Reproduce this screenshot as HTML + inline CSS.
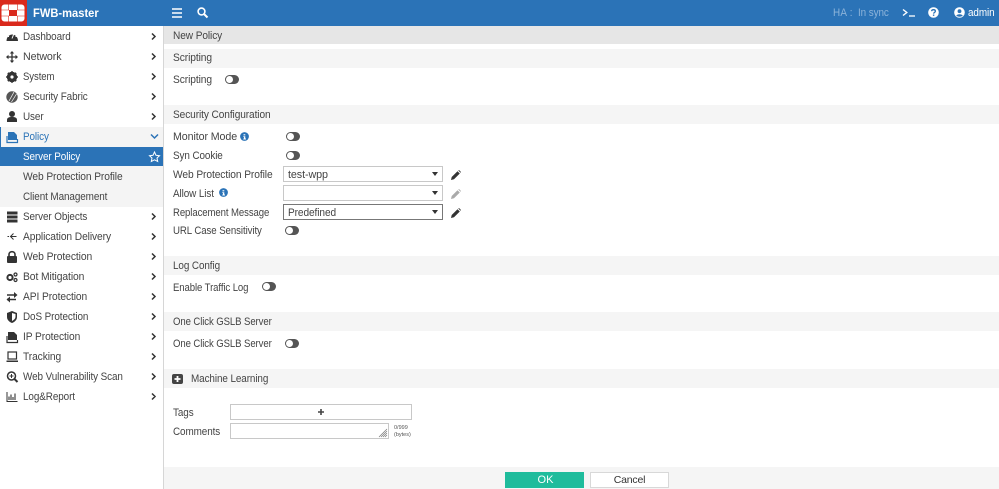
<!DOCTYPE html>
<html><head><meta charset="utf-8"><title>FWB-master</title>
<style>
*{box-sizing:border-box}
html,body{margin:0;padding:0;width:999px;height:489px;overflow:hidden;background:#fff}
body{font-family:"Liberation Sans",sans-serif;font-size:11px;color:#444;position:relative}
.a{position:absolute}
.t{position:absolute;white-space:nowrap;line-height:14px;height:14px;letter-spacing:-.1px;transform:scaleX(.9);transform-origin:0 0;margin-top:1px}
.bar{position:absolute;left:164px;width:835px;height:19px;background:#f5f5f5}
svg{position:absolute;overflow:visible}
.sw{position:absolute;width:14px;height:9px;border-radius:4.5px;background:#555;margin-top:-1px}
.sw:after{content:"";position:absolute;left:1px;top:1px;width:7px;height:7px;border-radius:3.5px;background:#fff}
.sel{position:absolute;left:283px;width:160px;height:16px;background:#fff;border:1px solid #c8c8c8}
.sel:after{content:"";position:absolute;right:4px;top:5px;border:3.5px solid transparent;border-top:4px solid #333;border-bottom:0}
</style></head><body>

<div class="a" style="left:0;top:0;width:999px;height:26px;background:#2b73b7"></div>
<div class="a" style="left:0;top:0;width:27px;height:26px;background:#da291c"></div>
<svg style="left:0;top:0" width="27" height="26" viewBox="0 0 27 26"><path fill="#fff" fill-rule="evenodd" d="M4.500 4.500H21.500A3 3 0 0 1 24.500 7.500V18.500A3 3 0 0 1 21.500 21.500H4.500A3 3 0 0 1 1.500 18.500V7.500A3 3 0 0 1 4.500 4.500ZM9 10V16H17V10Z"/><path d="M8.500 4.500V10M17.500 4.500V10M8.500 16V21.500M17.500 16V21.500M1.500 10H9M17 10H24.500M1.500 16H9M17 16H24.500" stroke="#da291c" stroke-width=".6"/></svg>
<div class="t" style="left:33px;top:5px;color:#fff;font-size:12px;font-weight:bold;letter-spacing:0;transform:scaleX(.93)">FWB-master</div>
<svg style="left:172px;top:8px" width="10" height="10"><path d="M0 1H10M0 5H10M0 9H10" stroke="#fff" stroke-width="1.600"/></svg>
<svg style="left:197px;top:7px" width="11" height="11"><circle cx="4.500" cy="4.500" r="3.400" fill="none" stroke="#fff" stroke-width="1.600"/><path d="M7 7L10.500 10.500" stroke="#fff" stroke-width="2"/></svg>
<div class="t" style="left:833px;top:5px;color:#8db4da;letter-spacing:.3px">HA :</div>
<div class="t" style="left:858px;top:5px;color:#8db4da">In sync</div>
<svg style="left:903px;top:9px" width="12" height="9"><path d="M0 .5L3.800 3.500L0 6.500" fill="none" stroke="#fff" stroke-width="1.400"/><path d="M6 7H12" stroke="#fff" stroke-width="1.300"/></svg>
<svg style="left:928px;top:7px" width="11" height="11"><circle cx="5.500" cy="5.500" r="5.300" fill="#fff"/><path d="M3.600 4.200C3.700 2.200 7.400 2.200 7.400 4.200C7.400 5.400 5.600 5.400 5.600 6.600" fill="none" stroke="#2b73b7" stroke-width="1.300"/><rect x="4.900" y="7.500" width="1.400" height="1.400" fill="#2b73b7"/></svg>
<svg style="left:954px;top:7px" width="11" height="11"><circle cx="5.500" cy="5.500" r="5.300" fill="#fff"/><circle cx="5.500" cy="4.200" r="1.900" fill="#2b73b7"/><path d="M2.300 8.800C3 6.800 8 6.800 8.700 8.800C7.500 10 3.500 10 2.300 8.800Z" fill="#2b73b7"/></svg>
<div class="t" style="left:968px;top:5px;color:#fff;font-size:11px">admin</div>

<!-- sidebar -->
<div class="a" style="left:0;top:26px;width:164px;height:463px;background:#fff;border-right:1px solid #d6d6d6"></div>
<div class="a" style="left:0;top:127px;width:163px;height:20px;background:#f4f4f4;border-left:1px solid #2b73b7"></div>
<div class="a" style="left:0;top:147px;width:163px;height:19px;background:#2b73b7"></div>
<div class="a" style="left:0;top:166px;width:163px;height:41px;background:#f4f4f4"></div>

<div class="t" style="left:23px;top:29px">Dashboard</div>
<div class="t" style="left:23px;top:49px;transform:scaleX(.97)">Network</div>
<div class="t" style="left:23px;top:69px;transform:scaleX(.87)">System</div>
<div class="t" style="left:23px;top:89px">Security Fabric</div>
<div class="t" style="left:23px;top:109px">User</div>
<div class="t" style="left:23px;top:129px;color:#2b73b7">Policy</div>
<div class="t" style="left:23px;top:149px;color:#fff">Server Policy</div>
<div class="t" style="left:23px;top:169px;transform:scaleX(.93)">Web Protection Profile</div>
<div class="t" style="left:23px;top:189px">Client Management</div>
<div class="t" style="left:23px;top:209px">Server Objects</div>
<div class="t" style="left:23px;top:229px;transform:scaleX(.93)">Application Delivery</div>
<div class="t" style="left:23px;top:249px;transform:scaleX(.94)">Web Protection</div>
<div class="t" style="left:23px;top:269px;transform:scaleX(.94)">Bot Mitigation</div>
<div class="t" style="left:23px;top:289px;transform:scaleX(.93)">API Protection</div>
<div class="t" style="left:23px;top:309px">DoS Protection</div>
<div class="t" style="left:23px;top:329px;transform:scaleX(.93)">IP Protection</div>
<div class="t" style="left:23px;top:349px;transform:scaleX(.93)">Tracking</div>
<div class="t" style="left:23px;top:369px">Web Vulnerability Scan</div>
<div class="t" style="left:23px;top:389px">Log&amp;Report</div>

<svg style="left:0;top:0" width="164" height="489" fill="#333">
<g fill="none" stroke="#333" stroke-width="1.500">
<path d="M152 33.500L155 36.500L152 39.500M152 53.500L155 56.500L152 59.500M152 73.500L155 76.500L152 79.500M152 93.500L155 96.500L152 99.500M152 113.500L155 116.500L152 119.500M152 213.500L155 216.500L152 219.500M152 233.500L155 236.500L152 239.500M152 253.500L155 256.500L152 259.500M152 273.500L155 276.500L152 279.500M152 293.500L155 296.500L152 299.500M152 313.500L155 316.500L152 319.500M152 333.500L155 336.500L152 339.500M152 353.500L155 356.500L152 359.500M152 373.500L155 376.500L152 379.500M152 393.500L155 396.500L152 399.500"/>
<path d="M151 134.500L154.500 138L158 134.500" stroke="#2b73b7"/>
</g>
<path d="M154.500 152L156 155.300L159.500 155.700L157 158L157.700 161.500L154.500 159.800L151.300 161.500L152 158L149.500 155.700L153 155.300Z" fill="none" stroke="#fff" stroke-width="1"/>
<!-- dashboard -->
<path d="M6.500 41A5.700 6.500 0 1 1 18 41Z"/><path d="M12 38.500L14 33.500M8 36.500H9M15.500 36.500H16.500M9.500 33.800L10 34.500" stroke="#fff" stroke-width="1"/>
<!-- network -->
<path d="M12 52V62M7 57H17" stroke="#333" stroke-width="1.300"/><path d="M12 51L14.200 53.500H9.800ZM12 63L14.200 60.500H9.800ZM6 57L8.500 54.800V59.200ZM18 57L15.500 54.800V59.200Z"/>
<!-- system -->
<circle cx="12" cy="77" r="3.800" fill="none" stroke="#333" stroke-width="2.800"/><path d="M12 71.200V82.800M6.200 77H17.800M7.900 72.900L16.100 81.100M16.100 72.900L7.900 81.100" stroke="#333" stroke-width="1.800"/><circle cx="12" cy="77" r="1.600" fill="#fff"/>
<!-- fabric -->
<circle cx="12" cy="97" r="5.700" fill="#555"/><path d="M9 101L14 92M11.500 102L16.500 94" stroke="#fff" stroke-width=".7"/>
<!-- user -->
<circle cx="12" cy="114" r="3"/><path d="M7 122V120C7 117.500 9 117 12 117C15 117 17 117.500 17 120V122Z"/>
<!-- policy -->
<path d="M8 132H14L17 135V140H8Z" fill="#2b73b7"/><path d="M7 136V142.500H17.500V139" fill="none" stroke="#2b73b7" stroke-width="1.200"/>
<!-- server objects -->
<path d="M7 212.500H17.500V215.500H7ZM7 216.500H17.500V219.500H7ZM7 220.500H17.500V223.500H7Z" transform="translate(0,-1)"/>
<!-- delivery -->
<path d="M16.500 236.500H11M13.500 233.500L10.500 236.500L13.500 239.500M7.500 236.500H9" fill="none" stroke="#333" stroke-width="1"/>
<!-- lock -->
<rect x="7" y="256" width="10" height="7" rx="1"/><path d="M9 256.500V254.500C9 250.800 15 250.800 15 254.500V256.500" fill="none" stroke="#333" stroke-width="1.600"/>
<!-- bot -->
<circle cx="10" cy="277.500" r="2.600" fill="none" stroke="#333" stroke-width="2"/><circle cx="15.500" cy="274.500" r="1.500" fill="none" stroke="#333" stroke-width="1.200"/><circle cx="15.500" cy="280" r="1.500" fill="none" stroke="#333" stroke-width="1.200"/>
<!-- api -->
<path d="M7 295H16M7 299.500H16" stroke="#333" stroke-width="1.500"/><path d="M14 292L17.500 295L14 298ZM10 296.500L6.500 299.500L10 302.500Z"/>
<!-- dos -->
<path d="M12 311L17 313V317C17 320 14.500 322 12 323C9.500 322 7 320 7 317V313Z"/><path d="M12 313V321C13.500 320 15.500 319 15.500 316.500V314Z" fill="#fff"/>
<!-- ip -->
<path d="M8 332H14L17 335V340H8Z"/><path d="M7 336V342.500H17.500V340" fill="none" stroke="#333" stroke-width="1.200"/>
<!-- tracking -->
<rect x="8" y="352" width="8.500" height="7" fill="none" stroke="#333" stroke-width="1.200"/><path d="M6.500 360.500H18V362H6.500Z"/>
<!-- vuln -->
<circle cx="11.500" cy="376" r="4" fill="none" stroke="#333" stroke-width="1.500"/><path d="M14.500 379L17.500 382" stroke="#333" stroke-width="2"/><path d="M9.500 376H13.500M11.500 374V378" stroke="#333"/>
<!-- log -->
<path d="M7 392V401.500H17.500" fill="none" stroke="#333" stroke-width="1"/><path d="M9 396.500V400M11 394.500V400M13 397V400M15 393.500V400" stroke="#333" stroke-width="1.100"/>
</svg>

<!-- content -->
<div class="a" style="left:164px;top:26px;width:835px;height:18px;background:#e6e6e6"></div>
<div class="t" style="left:173px;top:28px;transform:scaleX(.92)">New Policy</div>
<div class="bar" style="top:49px"></div>
<div class="t" style="left:173px;top:50px;transform:scaleX(.93)">Scripting</div>
<div class="t" style="left:173px;top:72px;transform:scaleX(.93)">Scripting</div>
<div class="sw" style="left:225px;top:76px"></div>

<div class="bar" style="top:105px"></div>
<div class="t" style="left:173px;top:107px;transform:scaleX(.92)">Security Configuration</div>
<div class="t" style="left:173px;top:129px;transform:scaleX(.97)">Monitor Mode</div>
<svg style="left:240px;top:132px" width="9" height="9"><circle cx="4.500" cy="4.500" r="4.400" fill="#2b73b7"/><path d="M3.500 2.200H5.300V3.400H3.500ZM3.300 4.200H5.300V6.500H6V7.500H3.300V6.500H4V5.100H3.300Z" fill="#fff"/></svg>
<div class="sw" style="left:286px;top:133px"></div>
<div class="t" style="left:173px;top:148px">Syn Cookie</div>
<div class="sw" style="left:286px;top:152px"></div>
<div class="t" style="left:173px;top:167px;transform:scaleX(.93)">Web Protection Profile</div>
<div class="sel" style="top:166px"></div>
<div class="t" style="left:288px;top:167px;transform:scaleX(.98)">test-wpp</div>
<div class="t" style="left:173px;top:186px">Allow List</div>
<svg style="left:219px;top:188px" width="9" height="9"><circle cx="4.500" cy="4.500" r="4.400" fill="#2b73b7"/><path d="M3.500 2.200H5.300V3.400H3.500ZM3.300 4.200H5.300V6.500H6V7.500H3.300V6.500H4V5.100H3.300Z" fill="#fff"/></svg>
<div class="sel" style="top:185px"></div>
<div class="t" style="left:173px;top:205px;transform:scaleX(.87)">Replacement Message</div>
<div class="sel" style="top:204px;border-color:#777"></div>
<div class="t" style="left:288px;top:205px;transform:scaleX(.92)">Predefined</div>
<svg style="left:451px;top:170px" width="10" height="10"><path d="M0 10L.7 7L6.500 1.200L8.800 3.500L3 9.300ZM7.300 .5L8 0L10 2L9.500 2.700Z" fill="#333"/></svg>
<svg style="left:451px;top:189px" width="10" height="10"><path d="M0 10L.7 7L6.500 1.200L8.800 3.500L3 9.300ZM7.300 .5L8 0L10 2L9.500 2.700Z" fill="#aaa"/></svg>
<svg style="left:451px;top:208px" width="10" height="10"><path d="M0 10L.7 7L6.500 1.200L8.800 3.500L3 9.300ZM7.300 .5L8 0L10 2L9.500 2.700Z" fill="#333"/></svg>
<div class="t" style="left:173px;top:223px;transform:scaleX(.88)">URL Case Sensitivity</div>
<div class="sw" style="left:285px;top:227px"></div>

<div class="bar" style="top:256px"></div>
<div class="t" style="left:173px;top:258px">Log Config</div>
<div class="t" style="left:173px;top:280px;transform:scaleX(.87)">Enable Traffic Log</div>
<div class="sw" style="left:262px;top:283px"></div>

<div class="bar" style="top:312px"></div>
<div class="t" style="left:173px;top:314px;transform:scaleX(.87)">One Click GSLB Server</div>
<div class="t" style="left:173px;top:336px;transform:scaleX(.87)">One Click GSLB Server</div>
<div class="sw" style="left:285px;top:340px"></div>

<div class="bar" style="top:369px"></div>
<svg style="left:172px;top:374px" width="11" height="10"><rect width="11" height="10" rx="2" fill="#444"/><path d="M2.500 5H8.500M5.500 2V8" stroke="#fff" stroke-width="1.800"/></svg>
<div class="t" style="left:191px;top:371px">Machine Learning</div>

<div class="t" style="left:173px;top:405px">Tags</div>
<div class="a" style="left:230px;top:404px;width:182px;height:16px;border:1px solid #c8c8c8;background:#fff"></div>
<svg style="left:318px;top:409px" width="6" height="6"><path d="M0 3H6M3 0V6" stroke="#444" stroke-width="1.600"/></svg>
<div class="t" style="left:173px;top:424px">Comments</div>
<div class="a" style="left:230px;top:423px;width:159px;height:16px;border:1px solid #c8c8c8;background:#fff"></div>
<svg style="left:378px;top:427px" width="10" height="11"><path d="M1 10L9 2M3 10L9 4M5 10L9 6M7 10L9 8" stroke="#777" stroke-width=".7"/></svg>
<div class="a" style="left:394px;top:425px;font-size:5.500px;line-height:6.500px;color:#555;white-space:nowrap">0/999<br>(bytes)</div>

<!-- footer -->
<div class="a" style="left:164px;top:467px;width:835px;height:22px;background:#f5f5f5"></div>
<div class="a" style="left:505px;top:472px;width:79px;height:16px;background:#1fbc9c;color:#fff;text-align:center;line-height:17px;font-size:11px;padding-left:2px">OK</div>
<div class="a" style="left:590px;top:472px;width:79px;height:16px;background:#fff;border:1px solid #d8d8d8;color:#333;text-align:center;line-height:15px;font-size:10.500px;letter-spacing:-.2px">Cancel</div>
</body></html>
